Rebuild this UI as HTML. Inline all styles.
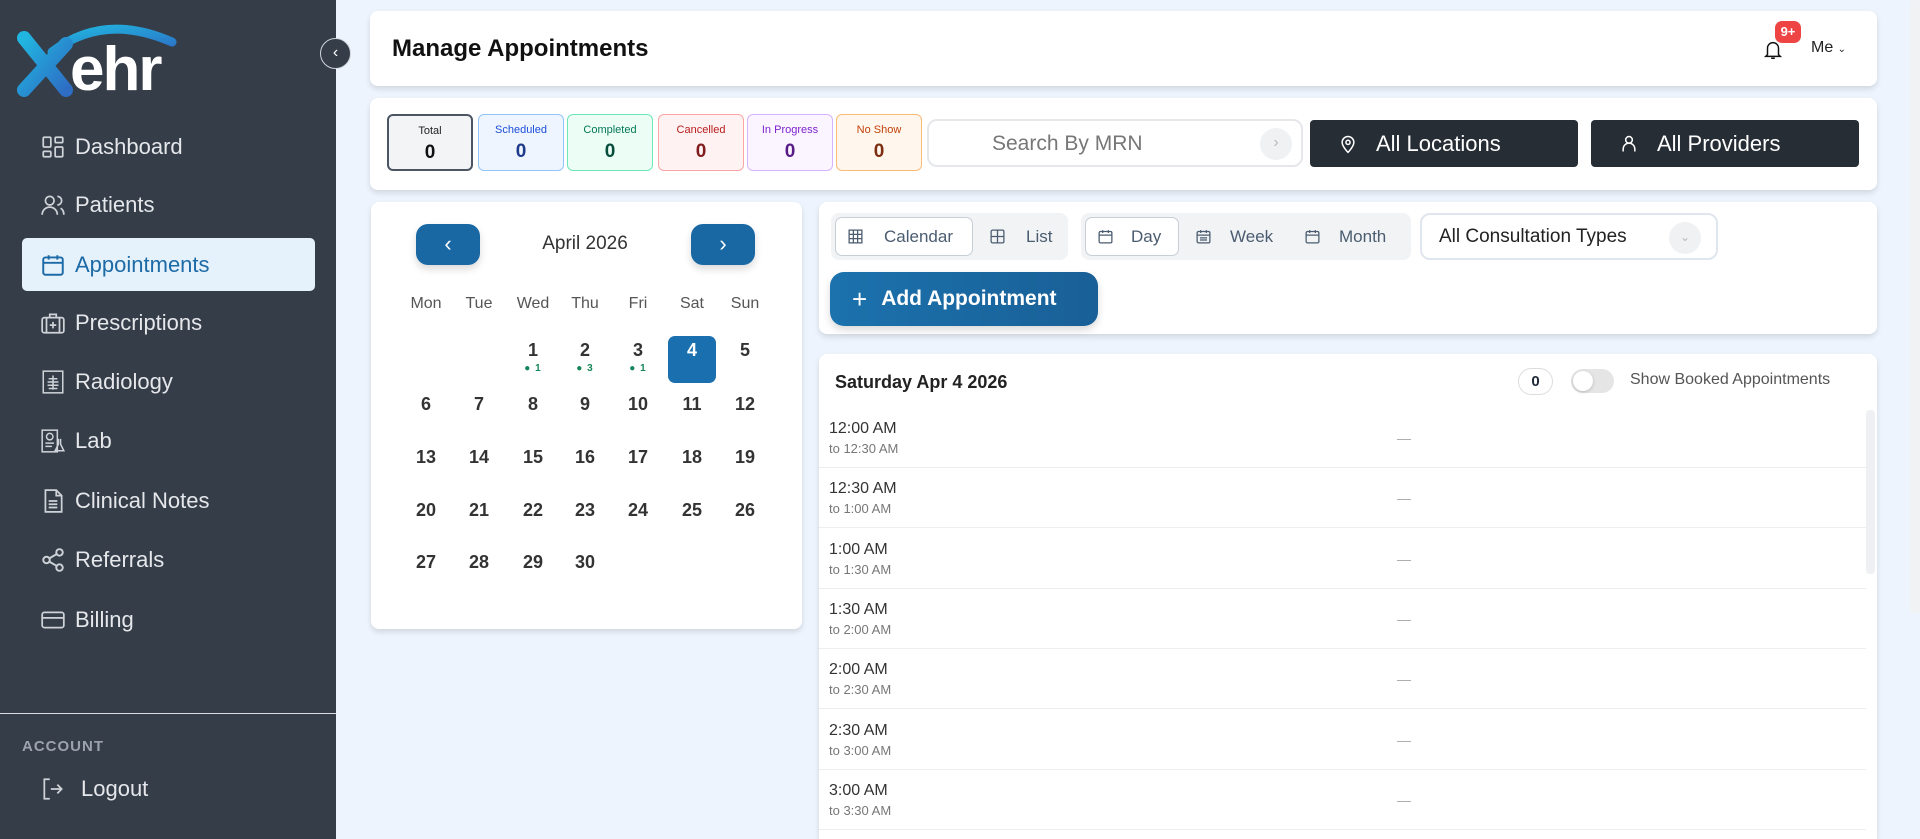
<!DOCTYPE html>
<html style="overflow:hidden;width:1920px;height:839px"><head><meta charset="utf-8"><style>
*{box-sizing:border-box;margin:0;padding:0}
body{width:1920px;height:839px;overflow:hidden;background:#eef4fd;font-family:"Liberation Sans",sans-serif;position:relative;color:#1f2937}
.abs{position:absolute}
#sb{left:0;top:0;width:336px;height:839px;background:#343d48}
.nav{position:absolute;left:22px;width:293px;height:53px;display:flex;align-items:center;color:#e5e7eb;font-size:22px}
.nav svg{position:absolute;left:18px;top:50%;margin-top:-13px}
.nav span{position:absolute;left:53px}
.card{position:absolute;background:#fff;border-radius:8px;box-shadow:0 3px 6px rgba(0,0,0,.12)}
.stat{position:absolute;top:114px;width:86px;height:57px;border-radius:6px;border:1px solid;text-align:center;font-size:11px;padding-top:9px}
.stat b{display:block;font-size:19px;margin-top:5px}
.dark{position:absolute;top:120px;height:47px;background:#262d35;border-radius:4px;color:#fff;font-size:22px;display:flex;align-items:center}
.dh{position:absolute;top:295px;width:50px;margin-left:-25px;text-align:center;font-size:16px;color:#555}
.dn{position:absolute;width:50px;margin-left:-25px;text-align:center;font-size:18px;font-weight:bold;color:#333}
.dot{font-size:10px;color:#16865a;font-weight:bold;display:block;margin-top:2px;letter-spacing:1px}
.row{position:absolute;left:0;width:1047px;height:60px;border-bottom:1px solid #eceef1}
.row .t{position:absolute;left:10px;top:12px;font-size:16px;color:#333}
.row .s{position:absolute;left:10px;top:33px;font-size:13px;color:#777}
.row .d{position:absolute;left:578px;top:22px;color:#aaa;font-size:14px}
.tb{position:absolute;height:39px;display:flex;align-items:center;font-size:17px;color:#4b5c70}
</style></head><body>
<div id="sb" class="abs">
 <svg class="abs" style="left:14px;top:14px" width="180" height="84" viewBox="0 0 180 84">
  <defs><linearGradient id="g" x1="0" y1="0" x2="1" y2="1"><stop offset="0" stop-color="#21b6e0"/><stop offset="1" stop-color="#2d6dc4"/></linearGradient></defs>
  <path d="M38 38 Q90 -2 158 28" stroke="url(#g)" stroke-width="9" fill="none" stroke-linecap="round"/>
  <path d="M10 24 L52 76 M52 30 L10 76" stroke="url(#g)" stroke-width="14" stroke-linecap="round"/>
  <text x="56" y="76" fill="#fff" font-size="62" font-weight="bold" font-family="Liberation Sans" letter-spacing="-2">ehr</text>
 </svg>
 <div class="abs" style="left:320px;top:38px;width:31px;height:31px;border-radius:50%;background:#343d48;border:1.5px solid #cfd5db;color:#fff;text-align:center;line-height:27px;font-size:16px">‹</div>
 <div class="nav" style="top:120px"><svg width="26" height="26" viewBox="0 0 24 24" fill="none" stroke="#cfd3d8" stroke-width="1.6"><rect x="3" y="3" width="7" height="9" rx="1"/><rect x="14" y="3" width="7" height="5" rx="1"/><rect x="14" y="12" width="7" height="9" rx="1"/><rect x="3" y="16" width="7" height="5" rx="1"/></svg><span>Dashboard</span></div>
 <div class="nav" style="top:178px"><svg width="26" height="26" viewBox="0 0 24 24" fill="none" stroke="#cfd3d8" stroke-width="1.6"><circle cx="9" cy="8" r="4"/><path d="M2 21c0-4 3-7 7-7s7 3 7 7M16 4a4 4 0 010 8M19 15c2 1 3 3 3 6"/></svg><span>Patients</span></div>
 <div class="nav" style="top:238px;background:#e6f2fb;border-radius:5px;color:#1c6aa6"><svg width="26" height="26" viewBox="0 0 24 24" fill="none" stroke="#1c6aa6" stroke-width="1.8"><rect x="3" y="5" width="18" height="16" rx="2"/><path d="M3 10h18M8 3v4M16 3v4"/></svg><span>Appointments</span></div>
 <div class="nav" style="top:296px"><svg width="26" height="26" viewBox="0 0 24 24" fill="none" stroke="#cfd3d8" stroke-width="1.6"><rect x="2" y="7" width="20" height="14" rx="2"/><path d="M9 7V4h6v3M12 11v6M9 14h6M6 7v14M18 7v14"/></svg><span>Prescriptions</span></div>
 <div class="nav" style="top:355px"><svg width="26" height="26" viewBox="0 0 24 24" fill="none" stroke="#cfd3d8" stroke-width="1.4"><rect x="3" y="2" width="18" height="20"/><path d="M12 6v13M8 9h8M7 12h10M7 15h10M8 18h8"/></svg><span>Radiology</span></div>
 <div class="nav" style="top:414px"><svg width="26" height="26" viewBox="0 0 24 24" fill="none" stroke="#cfd3d8" stroke-width="1.4"><rect x="2" y="2" width="14" height="20"/><circle cx="9" cy="8" r="3"/><path d="M5 14h8M5 17h6M17 10v5l-3 6h8l-3-6v-5"/></svg><span>Lab</span></div>
 <div class="nav" style="top:474px"><svg width="26" height="26" viewBox="0 0 24 24" fill="none" stroke="#cfd3d8" stroke-width="1.6"><path d="M5 2h10l5 5v15H5z"/><path d="M15 2v5h5M8 12h8M8 15h8M8 18h8"/></svg><span>Clinical Notes</span></div>
 <div class="nav" style="top:533px"><svg width="26" height="26" viewBox="0 0 24 24" fill="none" stroke="#cfd3d8" stroke-width="1.8"><circle cx="18" cy="5" r="3"/><circle cx="6" cy="12" r="3"/><circle cx="18" cy="19" r="3"/><path d="M8.6 10.5l6.8-4M8.6 13.5l6.8 4"/></svg><span>Referrals</span></div>
 <div class="nav" style="top:593px"><svg width="26" height="26" viewBox="0 0 24 24" fill="none" stroke="#cfd3d8" stroke-width="1.6"><rect x="2" y="5" width="20" height="14" rx="2"/><path d="M2 10h20"/></svg><span>Billing</span></div>
 <div class="abs" style="left:0;top:713px;width:336px;height:1px;background:#d8dce0"></div>
 <div class="abs" style="left:22px;top:738px;font-size:15px;font-weight:bold;color:#9ca3af;letter-spacing:1px">ACCOUNT</div>
 <div class="nav" style="top:762px"><svg width="26" height="26" viewBox="0 0 24 24" fill="none" stroke="#cfd3d8" stroke-width="1.6"><path d="M9 3H4v18h5M10 12h10M16 8l4 4-4 4"/></svg><span style="left:59px">Logout</span></div>
</div>

<div class="card" style="left:370px;top:11px;width:1507px;height:75px">
 <div class="abs" style="left:22px;top:24px;font-size:24px;font-weight:bold;color:#111">Manage Appointments</div>
 <svg class="abs" style="left:1392px;top:26px" width="22" height="26" viewBox="0 0 24 24" fill="none" stroke="#111" stroke-width="1.6"><path d="M6 17V10a6 6 0 0112 0v7l2 2H4zM10 21h4"/></svg>
 <div class="abs" style="left:1405px;top:10px;width:26px;height:22px;background:#ef4444;border-radius:7px;color:#fff;font-size:13px;font-weight:bold;text-align:center;line-height:22px">9+</div>
 <div class="abs" style="left:1441px;top:28px;font-size:16px;color:#222">Me <span style="font-size:10px">⌄</span></div>
</div>

<div class="card" style="left:370px;top:98px;width:1507px;height:92px"></div>
<div class="stat" style="left:387px;background:#f3f4f6;border:2px solid #4b5563;color:#222">Total<b style="color:#111">0</b></div>
<div class="stat" style="left:478px;background:#eef5ff;border-color:#93c5fd;color:#1d4ed8">Scheduled<b style="color:#1e3a8a">0</b></div>
<div class="stat" style="left:567px;background:#ecfdf5;border-color:#6ee7b7;color:#047857">Completed<b style="color:#064e3b">0</b></div>
<div class="stat" style="left:658px;background:#fef2f2;border-color:#fca5a5;color:#b91c1c">Cancelled<b style="color:#7f1d1d">0</b></div>
<div class="stat" style="left:747px;background:#faf5ff;border-color:#d8b4fe;color:#7e22ce">In Progress<b style="color:#581c87">0</b></div>
<div class="stat" style="left:836px;background:#fff7ed;border-color:#fdba74;color:#c2410c">No Show<b style="color:#7c2d12">0</b></div>
<div class="abs" style="left:927px;top:119px;width:376px;height:48px;border:2px solid #e5e7eb;border-radius:10px;background:#fff">
 <div class="abs" style="left:63px;top:11px;font-size:21px;color:#777">Search By MRN</div>
 <div class="abs" style="left:331px;top:7px;width:32px;height:32px;border-radius:50%;background:#f0f1f3;color:#bbb;text-align:center;line-height:30px">›</div>
</div>
<div class="dark" style="left:1310px;width:268px"><svg style="margin-left:28px" width="20" height="22" viewBox="0 0 24 24" fill="none" stroke="#fff" stroke-width="1.8"><path d="M12 22s7-7 7-12a7 7 0 00-14 0c0 5 7 12 7 12z"/><circle cx="12" cy="10" r="2.5"/></svg><span style="margin-left:18px">All Locations</span></div>
<div class="dark" style="left:1591px;width:268px"><svg style="margin-left:28px" width="20" height="22" viewBox="0 0 24 24" fill="none" stroke="#fff" stroke-width="1.8"><circle cx="12" cy="7" r="4"/><path d="M5 21v-3a5 5 0 0114 0v3"/></svg><span style="margin-left:18px">All Providers</span></div>

<div class="card" style="left:371px;top:202px;width:431px;height:427px"></div>
<div class="abs" style="left:416px;top:224px;width:64px;height:41px;background:#1a68a3;border-radius:12px;color:#fff;text-align:center;line-height:40px;font-size:22px;box-shadow:0 4px 8px rgba(0,0,0,.15)">‹</div>
<div class="abs" style="left:691px;top:224px;width:64px;height:41px;background:#1a68a3;border-radius:12px;color:#fff;text-align:center;line-height:40px;font-size:22px;box-shadow:0 4px 8px rgba(0,0,0,.15)">›</div>
<div class="abs" style="left:505px;top:233px;width:160px;text-align:center;font-size:19px;color:#333">April 2026</div>
<div class="dh" style="left:426px">Mon</div><div class="dh" style="left:479px">Tue</div><div class="dh" style="left:533px">Wed</div><div class="dh" style="left:585px">Thu</div><div class="dh" style="left:638px">Fri</div><div class="dh" style="left:692px">Sat</div><div class="dh" style="left:745px">Sun</div>
<div class="abs" style="left:668px;top:336px;width:48px;height:47px;background:#1a6fae;border-radius:7px"></div>
<div class="dn" style="left:533px;top:340px">1<span class="dot">● 1</span></div>
<div class="dn" style="left:585px;top:340px">2<span class="dot">● 3</span></div>
<div class="dn" style="left:638px;top:340px">3<span class="dot">● 1</span></div>
<div class="dn" style="left:692px;top:340px;color:#fff">4</div>
<div class="dn" style="left:745px;top:340px">5</div>
<div class="dn" style="left:426px;top:394px">6</div><div class="dn" style="left:479px;top:394px">7</div><div class="dn" style="left:533px;top:394px">8</div><div class="dn" style="left:585px;top:394px">9</div><div class="dn" style="left:638px;top:394px">10</div><div class="dn" style="left:692px;top:394px">11</div><div class="dn" style="left:745px;top:394px">12</div>
<div class="dn" style="left:426px;top:447px">13</div><div class="dn" style="left:479px;top:447px">14</div><div class="dn" style="left:533px;top:447px">15</div><div class="dn" style="left:585px;top:447px">16</div><div class="dn" style="left:638px;top:447px">17</div><div class="dn" style="left:692px;top:447px">18</div><div class="dn" style="left:745px;top:447px">19</div>
<div class="dn" style="left:426px;top:500px">20</div><div class="dn" style="left:479px;top:500px">21</div><div class="dn" style="left:533px;top:500px">22</div><div class="dn" style="left:585px;top:500px">23</div><div class="dn" style="left:638px;top:500px">24</div><div class="dn" style="left:692px;top:500px">25</div><div class="dn" style="left:745px;top:500px">26</div>
<div class="dn" style="left:426px;top:552px">27</div><div class="dn" style="left:479px;top:552px">28</div><div class="dn" style="left:533px;top:552px">29</div><div class="dn" style="left:585px;top:552px">30</div>

<div class="card" style="left:819px;top:202px;width:1058px;height:132px"></div>
<div class="abs" style="left:831px;top:213px;width:237px;height:47px;background:#f1f3f5;border-radius:8px"></div>
<div class="abs" style="left:835px;top:217px;width:138px;height:39px;background:#fff;border:1px solid #c7ced6;border-radius:7px"></div>
<div class="tb" style="left:847px;top:217px"><svg width="17" height="17" viewBox="0 0 24 24" fill="none" stroke="#4b5c70" stroke-width="1.8"><rect x="3" y="3" width="18" height="18"/><path d="M3 9h18M3 15h18M9 3v18M15 3v18"/></svg><span style="margin-left:20px">Calendar</span></div>
<div class="tb" style="left:989px;top:217px"><svg width="17" height="17" viewBox="0 0 24 24" fill="none" stroke="#4b5c70" stroke-width="1.8"><rect x="3" y="3" width="18" height="18" rx="2"/><path d="M3 12h18M12 3v18"/></svg><span style="margin-left:20px">List</span></div>
<div class="abs" style="left:1081px;top:213px;width:330px;height:47px;background:#f1f3f5;border-radius:8px"></div>
<div class="abs" style="left:1085px;top:217px;width:94px;height:39px;background:#fff;border:1px solid #c7ced6;border-radius:7px"></div>
<div class="tb" style="left:1097px;top:217px"><svg width="17" height="17" viewBox="0 0 24 24" fill="none" stroke="#4b5c70" stroke-width="1.8"><rect x="3" y="5" width="18" height="16" rx="2"/><path d="M3 10h18M8 3v4M16 3v4"/></svg><span style="margin-left:17px">Day</span></div>
<div class="tb" style="left:1195px;top:217px"><svg width="17" height="17" viewBox="0 0 24 24" fill="none" stroke="#4b5c70" stroke-width="1.8"><rect x="3" y="5" width="18" height="16" rx="2"/><path d="M3 10h18M8 3v4M16 3v4M7 14h10M7 17h10"/></svg><span style="margin-left:18px">Week</span></div>
<div class="tb" style="left:1304px;top:217px"><svg width="17" height="17" viewBox="0 0 24 24" fill="none" stroke="#4b5c70" stroke-width="1.8"><rect x="3" y="5" width="18" height="16" rx="2"/><path d="M3 10h18M8 3v4M16 3v4"/></svg><span style="margin-left:18px">Month</span></div>
<div class="abs" style="left:1420px;top:213px;width:298px;height:47px;background:#fff;border:2px solid #dfe6ee;border-radius:10px">
 <div class="abs" style="left:17px;top:11px;font-size:19px;color:#222">All Consultation Types</div>
 <div class="abs" style="left:247px;top:7px;width:32px;height:32px;border-radius:50%;background:#f0f1f3;color:#bbb;text-align:center;line-height:30px;font-size:12px">⌄</div>
</div>
<div class="abs" style="left:830px;top:272px;width:268px;height:54px;background:linear-gradient(90deg,#1b72ad,#1a5f97);border-radius:14px;color:#fff;font-size:21px;font-weight:bold;display:flex;align-items:center;box-shadow:0 4px 8px rgba(0,0,0,.15)"><span style="margin-left:22px;font-weight:normal;font-size:26px">+</span><span style="margin-left:14px">Add Appointment</span></div>

<div class="card" style="left:819px;top:354px;width:1058px;height:485px;overflow:hidden;border-radius:8px 8px 0 0">
 <div class="abs" style="left:16px;top:18px;font-size:18px;font-weight:bold;color:#222">Saturday Apr 4 2026</div>
 <div class="abs" style="left:699px;top:14px;width:35px;height:27px;border:1px solid #ddd;border-radius:14px;text-align:center;line-height:25px;font-size:15px;font-weight:bold">0</div>
 <div class="abs" style="left:752px;top:15px;width:43px;height:24px;border-radius:12px;background:#e5e5e5"><div style="margin:2px;width:20px;height:20px;border-radius:50%;background:#fff;box-shadow:0 1px 3px rgba(0,0,0,.2)"></div></div>
 <div class="abs" style="left:811px;top:17px;font-size:16px;color:#555">Show Booked Appointments</div>
 <div class="abs" style="left:1047px;top:56px;width:9px;height:164px;background:#eef0f3;border-radius:4px"></div>
 <div class="row" style="top:54px"><div class="t">12:00 AM</div><div class="s">to 12:30 AM</div><div class="d">—</div></div>
 <div class="row" style="top:114px"><div class="t">12:30 AM</div><div class="s">to 1:00 AM</div><div class="d">—</div></div>
 <div class="row" style="top:175px"><div class="t">1:00 AM</div><div class="s">to 1:30 AM</div><div class="d">—</div></div>
 <div class="row" style="top:235px"><div class="t">1:30 AM</div><div class="s">to 2:00 AM</div><div class="d">—</div></div>
 <div class="row" style="top:295px"><div class="t">2:00 AM</div><div class="s">to 2:30 AM</div><div class="d">—</div></div>
 <div class="row" style="top:356px"><div class="t">2:30 AM</div><div class="s">to 3:00 AM</div><div class="d">—</div></div>
 <div class="row" style="top:416px"><div class="t">3:00 AM</div><div class="s">to 3:30 AM</div><div class="d">—</div></div>
</div>
<div class="abs" style="left:1910px;top:0;width:10px;height:613px;background:#f1f2f4;border-radius:4px"></div>
</body></html>
